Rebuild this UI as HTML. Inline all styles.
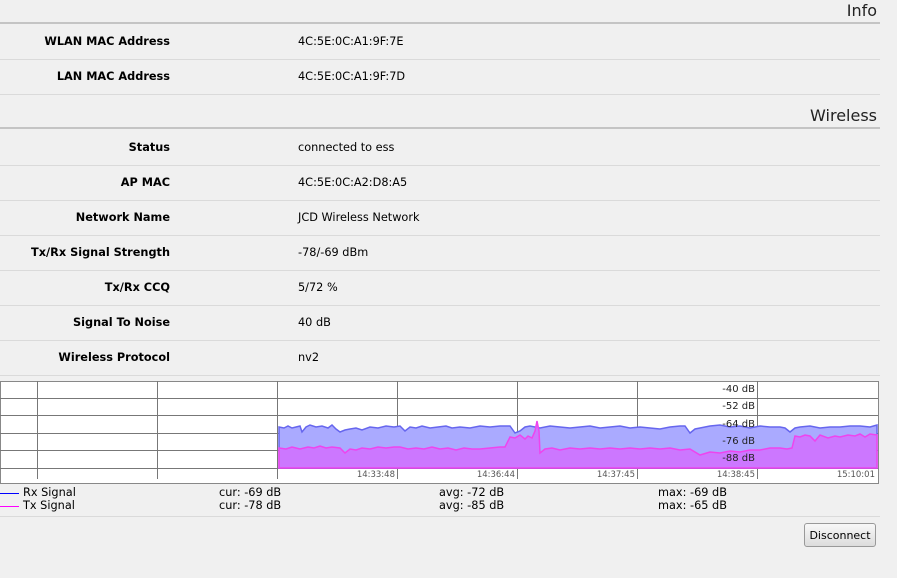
<!DOCTYPE html>
<html><head><meta charset="utf-8"><style>
body{margin:0;background:#f0f0f0;font-family:"DejaVu Sans",Verdana,sans-serif;font-size:11.3px;color:#000;width:897px;height:578px;overflow:hidden;position:relative}
.h{position:absolute;right:20px;font-size:16px;font-family:"DejaVu Sans",sans-serif;color:#222}
.ln{position:absolute;left:0;width:880px;height:1px;background:#dadada}
.hl{position:absolute;left:0;width:880px;height:2px;background:#c4c4c4}
.l{position:absolute;right:727px;font-weight:bold;white-space:nowrap}
.v{position:absolute;left:298px;white-space:nowrap}
.lg{position:absolute;white-space:nowrap}
.btn{position:absolute;left:804px;top:523px;width:72px;height:24px;border:1px solid #999;border-radius:3px;background:linear-gradient(#f8f8f8,#dcdcdc);font-size:11px;text-align:center;line-height:24px;box-sizing:border-box}
</style></head><body>
<div class="h" style="top:1px">Info</div>
<div class="hl" style="top:22px"></div>
<div class="l" style="top:35px">WLAN MAC Address</div><div class="v" style="top:35px">4C:5E:0C:A1:9F:7E</div>
<div class="ln" style="top:59px"></div>
<div class="l" style="top:70px">LAN MAC Address</div><div class="v" style="top:70px">4C:5E:0C:A1:9F:7D</div>
<div class="ln" style="top:94px"></div>
<div class="h" style="top:106px">Wireless</div>
<div class="hl" style="top:127px"></div>
<div class="l" style="top:141px">Status</div><div class="v" style="top:141px">connected to ess</div>
<div class="ln" style="top:165px"></div>
<div class="l" style="top:176px">AP MAC</div><div class="v" style="top:176px">4C:5E:0C:A2:D8:A5</div>
<div class="ln" style="top:200px"></div>
<div class="l" style="top:211px">Network Name</div><div class="v" style="top:211px">JCD Wireless Network</div>
<div class="ln" style="top:235px"></div>
<div class="l" style="top:246px">Tx/Rx Signal Strength</div><div class="v" style="top:246px">-78/-69 dBm</div>
<div class="ln" style="top:270px"></div>
<div class="l" style="top:281px">Tx/Rx CCQ</div><div class="v" style="top:281px">5/72 %</div>
<div class="ln" style="top:305px"></div>
<div class="l" style="top:316px">Signal To Noise</div><div class="v" style="top:316px">40 dB</div>
<div class="ln" style="top:340px"></div>
<div class="l" style="top:351px">Wireless Protocol</div><div class="v" style="top:351px">nv2</div>
<div class="ln" style="top:375px"></div>
<svg style="position:absolute;left:0;top:381px" width="882" height="105">
<rect x="0.5" y="0.5" width="878" height="102" fill="#fff" stroke="#888" stroke-width="1"/>
<g stroke="#777" stroke-width="1">
<line x1="0" y1="17.5" x2="878" y2="17.5"/><line x1="0" y1="34.5" x2="878" y2="34.5"/><line x1="0" y1="52.5" x2="878" y2="52.5"/><line x1="0" y1="69.5" x2="878" y2="69.5"/><line x1="0" y1="87.5" x2="878" y2="87.5"/>
<line x1="37.5" y1="0" x2="37.5" y2="98"/><line x1="157.5" y1="0" x2="157.5" y2="98"/><line x1="277.5" y1="0" x2="277.5" y2="98"/><line x1="397.5" y1="0" x2="397.5" y2="98"/><line x1="517.5" y1="0" x2="517.5" y2="98"/><line x1="637.5" y1="0" x2="637.5" y2="98"/><line x1="757.5" y1="0" x2="757.5" y2="98"/>
</g>
<path d="M279 46 L284 47 L288 45 L292 47 L296 46 L300 45 L302 51 L306 46 L310 44 L316 46 L322 45 L328 47 L332 44 L336 48 L340 51 L345 49 L350 48 L356 47 L362 49 L370 46 L378 47 L386 45 L394 46 L400 45 L405 50 L410 46 L416 47 L422 45 L430 47 L438 46 L446 45 L452 47 L460 46 L470 47 L480 45 L490 46 L500 45 L510 45 L515 52 L520 50 L525 46 L530 45 L540 47 L550 45 L560 46 L570 47 L580 46 L590 45 L600 47 L610 46 L620 45 L630 47 L640 46 L650 47 L660 48 L670 46 L680 45 L685 45 L690 52 L695 48 L700 47 L710 45 L720 44 L730 46 L740 45 L750 47 L760 45 L770 46 L780 46 L785 47 L790 51 L795 47 L800 46 L810 45 L820 47 L830 46 L840 46 L850 45 L860 45 L870 46 L877 44 L877 87 L279 87Z" fill="#aaaaff" stroke="#6666ee" stroke-width="1.5"/>
<path d="M279 67 L286 68 L292 66 L300 68 L308 66 L314 67 L320 65 L326 67 L332 66 L340 67 L345 72 L350 68 L356 69 L362 67 L370 68 L378 66 L386 67 L394 66 L400 66 L408 68 L416 67 L424 68 L432 66 L440 68 L448 67 L456 69 L464 67 L472 68 L480 68 L490 67 L500 66 L505 66 L510 56 L515 57 L520 54 L525 58 L528 55 L532 57 L535 50 L537 40 L539 50 L540 72 L545 68 L552 67 L560 69 L570 67 L580 68 L590 67 L600 68 L610 67 L620 68 L630 67 L640 68 L650 67 L660 68 L670 67 L680 69 L690 68 L700 74 L710 71 L720 72 L730 70 L740 71 L750 69 L760 69 L770 67 L780 67 L787 68 L792 67 L795 55 L800 56 L805 54 L810 55 L815 60 L820 54 L828 57 L835 55 L840 56 L848 54 L855 55 L860 53 L865 56 L870 53 L877 54 L877 87 L279 87Z" fill="#cc77ff" stroke="#ee44ee" stroke-width="1.5"/>
<g font-size="10" fill="#222" text-anchor="end"><text x="755" y="11">-40 dB</text><text x="755" y="28">-52 dB</text><text x="755" y="46">-64 dB</text><text x="755" y="63">-76 dB</text><text x="755" y="80">-88 dB</text></g>
<g font-size="8.5" fill="#555" text-anchor="end"><text x="395" y="96">14:33:48</text><text x="515" y="96">14:36:44</text><text x="635" y="96">14:37:45</text><text x="755" y="96">14:38:45</text><text x="875" y="96">15:10:01</text></g>
</svg>
<div style="position:absolute;left:0;top:493px;width:19px;height:1px;background:#00f"></div>
<div style="position:absolute;left:0;top:506px;width:19px;height:1px;background:#f0f"></div>
<div class="lg" style="left:23px;top:486px">Rx Signal</div><div class="lg" style="left:23px;top:499px">Tx Signal</div>
<div class="lg" style="left:219px;top:486px">cur: -69 dB</div><div class="lg" style="left:219px;top:499px">cur: -78 dB</div>
<div class="lg" style="left:439px;top:486px">avg: -72 dB</div><div class="lg" style="left:439px;top:499px">avg: -85 dB</div>
<div class="lg" style="left:658px;top:486px">max: -69 dB</div><div class="lg" style="left:658px;top:499px">max: -65 dB</div>
<div class="ln" style="top:516px"></div>
<div class="btn">Disconnect</div>
</body></html>
